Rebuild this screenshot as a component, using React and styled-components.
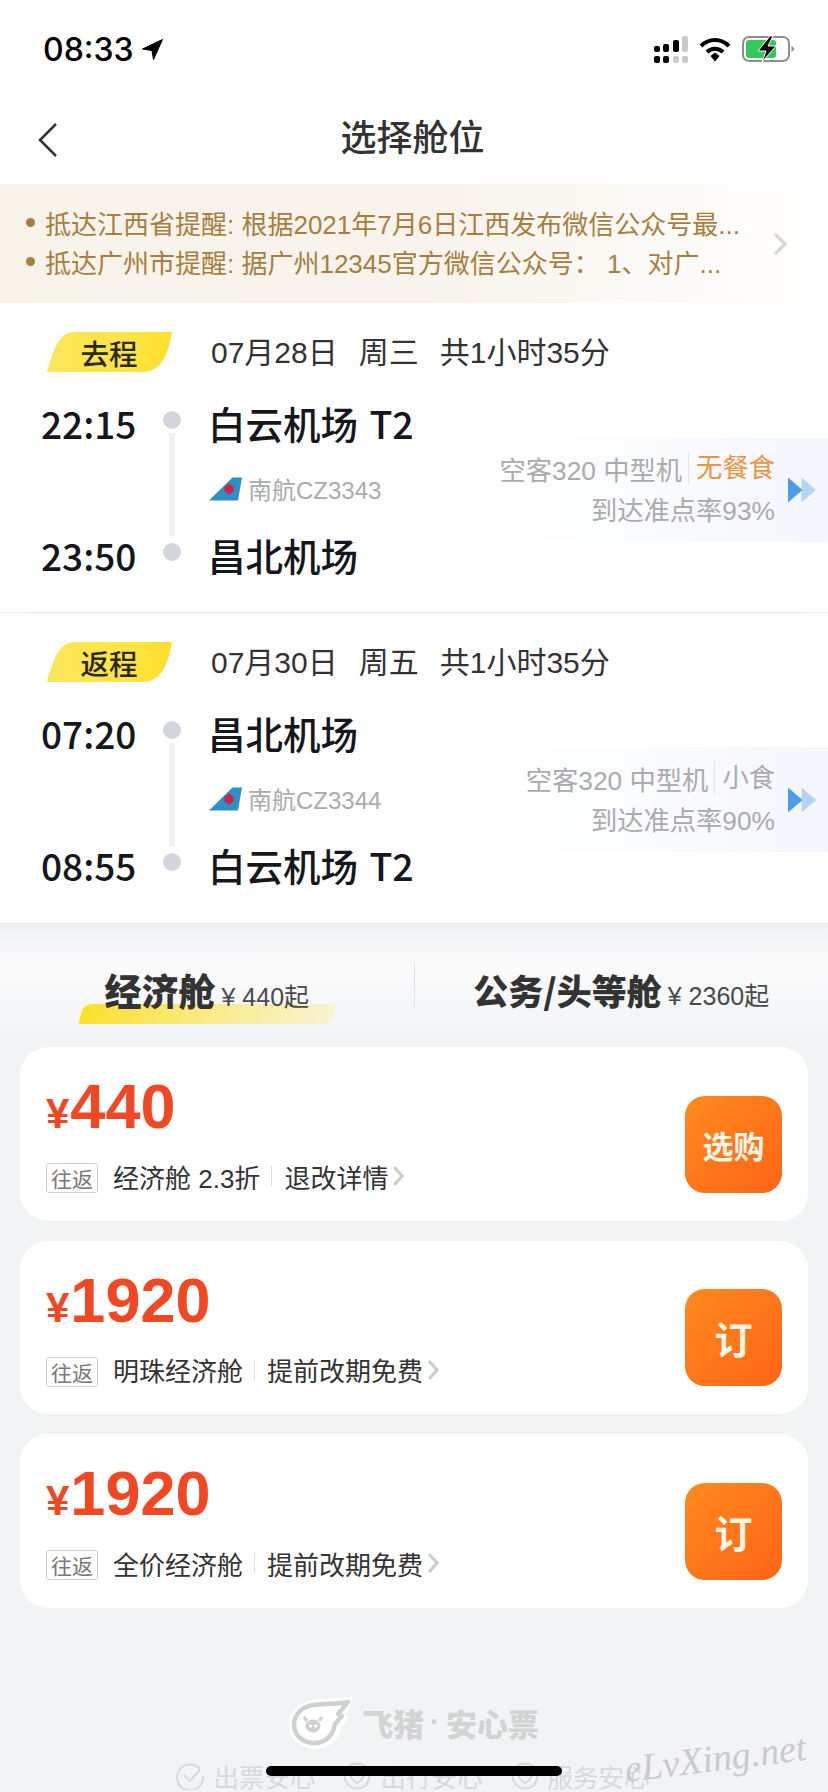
import React from "react";
import styled, { createGlobalStyle } from "styled-components";

const Global = createGlobalStyle`
  html, body { margin: 0; padding: 0; background: #f2f3f5; }
  * { box-sizing: border-box; }
  body { font-family: "Liberation Sans", "Noto Sans CJK SC", sans-serif; }
`;
const CJK = `"Noto Sans CJK SC", "Liberation Sans", sans-serif`;

const Page = styled.div`
  position: relative; width: 828px; height: 1792px; overflow: hidden;
  display: flex; flex-direction: column; background: #f2f3f5;
`;
const Top = styled.div`background: #fff;`;
const StatusBar = styled.div`
  height: 90px; display: flex; justify-content: space-between; align-items: flex-start;
  padding: 30px 33px 0 43px;
`;
const Clock = styled.div`
  display: flex; align-items: center; gap: 8px; height: 38px;
  font-family: Inter, "Liberation Sans", sans-serif; font-size: 32px; font-weight: 500; color: #000;
`;
const StatusIcons = styled.div`display: flex; align-items: center; gap: 11px; height: 38px;`;
const Nav = styled.div`
  position: relative; height: 94px; display: flex; align-items: center; justify-content: center;
`;
const Back = styled.svg`position: absolute; left: 37px; top: 32px;`;
const Title = styled.div`
  font-family: ${CJK}; font-size: 36px; font-weight: 500; color: #333; margin: -4px 3px 0 0;
`;
const Notice = styled.div`
  height: 119px; display: flex; align-items: center; justify-content: space-between;
  padding: 0 40px 0 26px;
  background: linear-gradient(90deg, #f7f2ea 0%, #f8f4ed 55%, #ffffff 100%);
`;
const NoticeLines = styled.div`display: flex; flex-direction: column; margin-top: -4px;`;
const NoticeLine = styled.div`
  display: flex; align-items: center; gap: 10px; height: 39px;
  font-size: 26px; color: #a87e3e; white-space: nowrap;
`;
const NoticeDot = styled.i`width: 9px; height: 9px; border-radius: 50%; background: #a87e3e;`;

const Flight = styled.section`
  position: relative; padding: 29px 0 ${p => p.$pb}px; background: #fff;
`;
const FlightHead = styled.div`
  display: flex; align-items: center; padding-left: 46px; height: 40px; margin-bottom: 28px;
`;
const Tag = styled.div`
  position: relative; width: 126px; height: 40px; display: flex; align-items: center; justify-content: center;
  font-family: ${CJK}; font-size: 28.5px; font-weight: 500; color: #2a2a1a;
  background: linear-gradient(95deg, #fce65c 0%, #ffe445 60%, #ffdf2a 100%);
  clip-path: path("M1 40 C6 22 12 0 28 0 L126 0 C122 22 116 40 96 40 Z");
`;
const DateLine = styled.div`
  margin: -4px 0 0 39px; display: flex; gap: 21px; font-size: 30px; color: #333; white-space: nowrap;
`;
const Timeline = styled.div`
  display: grid; grid-template-columns: 110px 40px 1fr; grid-template-rows: 50px 82px 50px;
  padding-left: 41px;
`;
const Time = styled.div`
  grid-column: 1; grid-row: ${p => p.$row}; align-self: center; margin-top: -4px;
  font-family: ${CJK}; font-size: 37px; font-weight: 500; color: #15171c; line-height: 50px;
`;
const Axis = styled.div`
  grid-column: 2; grid-row: 1 / -1; display: flex; flex-direction: column; align-items: center; padding-top: 11px;
  transform: translateX(1px);
`;
const Dot = styled.i`width: 18px; height: 18px; border-radius: 50%; background: #d3d4dc;`;
const AxisLine = styled.i`width: 6px; height: 103px; margin: 4px 0 7px; background: #f0f1f3;`;
const Airport = styled.div`
  grid-column: 3; grid-row: ${p => p.$row}; align-self: center; padding-left: 17px; margin-top: -4px;
  font-family: ${CJK}; font-size: 37.5px; font-weight: 500; color: #15171c; white-space: nowrap; line-height: 50px;
  word-spacing: 3px;
`;
const Airline = styled.div`
  grid-column: 3; grid-row: 2; align-self: center; padding-left: 18px; margin-top: -5px;
  display: flex; align-items: center; gap: 6px;
  font-size: 24px; color: #a9abad;
`;
const Perks = styled.div`
  grid-column: 3; grid-row: 1 / -1; justify-self: end; align-self: center; margin-top: -3px;
  width: 320px; height: 105px; display: flex; align-items: center; justify-content: flex-end; gap: 13px;
  padding-right: 12px;
  background: linear-gradient(90deg, rgba(243,246,251,0) 0%, rgba(243,246,251,0.35) 40%, #f3f6fb 100%);
`;
const PerkText = styled.div`
  display: flex; flex-direction: column; align-items: flex-end; margin-top: -3px;
  font-size: 26.3px; color: #a9abad;
`;
const PerkLine = styled.div`display: flex; align-items: center; height: 40px; white-space: pre;`;
const Meal = styled.span`
  margin-left: 6px; padding-left: 7px; border-left: 1px solid #e6e6e6; line-height: 34px;
  color: ${p => (p.$warm ? "#ee9340" : "#a9abad")};
`;
const Rule = styled.div`height: 1px; margin: 0 27px 0 26px; background: #e4e4e6;`;
const Hairline = styled.div`height: 1px; background: #e6e7e9;`;

const Cabins = styled.div`
  height: 123px; padding-top: 38px; display: grid; grid-template-columns: 1fr 1px 1fr; align-items: start;
  background: linear-gradient(180deg, #f0f1f3 0%, #fbfbfc 32%, #f6f7f8 65%, #f2f3f5 100%);
`;
const CabinDivider = styled.i`height: 46px; background: #e1e2e4;`;
const Cabin = styled.div`
  position: relative; display: flex; justify-content: center; align-items: baseline; gap: 6px;
  padding-top: 6px; height: 50px; z-index: 0;
`;
const CabinName = styled.span`
  font-family: ${CJK}; font-size: ${p => p.$size}px; font-weight: 900; color: #333; line-height: 44px; white-space: nowrap;
`;
const CabinFrom = styled.span`font-size: 25px; color: #4a4a4a; white-space: pre;`;
const Swoosh = styled.i`
  position: absolute; left: 81px; top: 42px; width: 253px; height: 20px; z-index: -1;
  transform: skewX(-14deg); border-radius: 8px 3px 10px 0;
  background: linear-gradient(90deg, #fde02a 0%, #faeb8f 55%, #f8f3d2 100%);
`;
const Cards = styled.div`display: flex; flex-direction: column; gap: 20px; padding: 0 20px;`;
const Card = styled.article`
  height: 173.5px; border-radius: 28px; background: #fff; padding: 0 26px;
  display: flex; justify-content: space-between;
`;
const CardInfo = styled.div`display: flex; flex-direction: column; padding-top: 27px;`;
const Price = styled.div`
  display: flex; align-items: baseline; height: 64px; line-height: 64px;
  color: #f24723; font-weight: 700; font-size: 63px;
`;
const Yen = styled.span`font-size: 42px; margin-right: 1px;`;
const Meta = styled.div`
  display: flex; align-items: center; margin-top: 23px; height: 30px;
  font-size: 26px; color: #333; white-space: nowrap;
`;
const RoundTrip = styled.span`
  width: 52px; height: 30px; margin: 4px 15px 0 0; display: flex; align-items: center; justify-content: center;
  border: 1px solid #cfcfcf; border-radius: 3px; font-size: 21px; color: #777;
`;
const MetaSep = styled.i`width: 1px; height: 20px; margin: 0 12px 0 11px; background: #ddd;`;
const Chevron = styled.svg`margin-left: 4px;`;
const Buy = styled.button`
  align-self: flex-end; margin-bottom: 28px; width: 97px; height: 97px; padding: 0; border: 0; border-radius: 20px;
  background: linear-gradient(135deg, #ff8a1e 0%, #ff6417 100%);
  font-family: ${CJK}; font-weight: 700; font-size: ${p => p.$size}px; color: #fff6e6;
`;
const Footer = styled.div`
  flex: 1; padding-top: 88px; display: flex; flex-direction: column; align-items: center; gap: 12px;
`;
const Brand = styled.div`display: flex; align-items: center; gap: 10px; height: 53px;`;
const BrandName = styled.div`
  display: flex; align-items: center; font-family: ${CJK}; font-size: 31px; font-weight: 900; color: #d2d4d4;
`;
const BrandDot = styled.span`width: 22px; text-align: center; font-family: "Liberation Sans", sans-serif; font-weight: 700;`;
const Trust = styled.div`display: flex; align-items: center; gap: 28px; height: 30px; margin-left: -2px;`;
const TrustItem = styled.div`
  display: flex; align-items: center; gap: 9px; height: 30px; line-height: 30px;
  font-family: ${CJK}; font-size: 25.5px; color: #d6d9d9; white-space: nowrap;
`;
const HomeBar = styled.i`
  position: absolute; left: 266px; bottom: 16px; width: 296px; height: 10px; border-radius: 5px; background: #000;
`;
const Watermark = styled.div`
  position: absolute; left: 624px; top: 1736px; transform: rotate(-7deg);
  font-family: "Liberation Serif", serif; font-style: italic; font-size: 38px; color: #c8cacc; white-space: nowrap;
`;

const Signal = () => (
  <svg width="34" height="27" viewBox="0 0 34 27">
    {[[0,10],[9,8],[19,4],[28,0]].map(([x, y], i) => (
      <rect key={i} x={x} y={y} width="6" height={16 - y} rx="2" fill={i === 3 ? "#c9c9c9" : "#000"} />
    ))}
    {[0, 9, 19, 28].map((x, i) => (
      <rect key={x} x={x} y="20" width="6" height="7" rx="2" fill={i > 1 ? "#c9c9c9" : "#000"} />
    ))}
  </svg>
);
const Wifi = () => (
  <svg width="32" height="25" viewBox="0 0 32 25">
    <path d="M2 9C10 1 22 1 30 9" fill="none" stroke="#000" strokeWidth="4" />
    <path d="M8 15C12.500 10.500 19.500 10.500 24 15" fill="none" stroke="#000" strokeWidth="4" />
    <path d="M11.500 19L16 15.500L20.500 19L16 24.500Z" fill="#000" />
  </svg>
);
const Battery = () => (
  <svg width="53" height="26" viewBox="0 0 53 26">
    <rect x="1" y="1" width="46" height="24" rx="6" fill="#fff" stroke="#8e8e8e" strokeWidth="2" />
    <rect x="4" y="4" width="30" height="18" rx="3" fill="#34c759" />
    <path d="M49.500 9.500L52.500 13L49.500 16.500Z" fill="#8e8e8e" />
    <path d="M28 0L16 15H24L20 26L34 10H26L31 0Z" fill="#000" stroke="#fff" strokeWidth="1" />
  </svg>
);
const LocationArrow = () => (
  <svg width="21" height="21" viewBox="0 0 21 21"><path d="M20.500 0.500L0.500 10L10 11.500L11.500 20.500Z" fill="#000" stroke="#000" strokeLinejoin="round" /></svg>
);
const SouthernLogo = () => (
  <svg width="33" height="24" viewBox="0 0 33 24">
    <path d="M0 23.500L23.500 0.500H33L29 23.500Z" fill="#2c90c6" />
    <circle cx="20" cy="12" r="4.500" fill="#c9254a" />
    <path d="M20 6V18M15 10L25 14M25 10L15 14" stroke="#c9254a" strokeWidth="1.500" />
  </svg>
);
const DoubleArrow = () => (
  <svg width="28" height="28" viewBox="0 0 27 26" style={{ flex: "none" }}>
    <path d="M13 1L27 13L13 25Z" fill="#b3d4f5" />
    <path d="M0 1L14 13L0 25Z" fill="#4d9cea" />
  </svg>
);
const SmallChevron = () => (
  <Chevron width="12" height="22" viewBox="0 0 12 22"><path d="M2 2L10 11L2 20" fill="none" stroke="#cdcdcd" strokeWidth="3.200" /></Chevron>
);
const CheckOpen = () => (
  <svg width="28" height="28" viewBox="0 0 28 28" style={{ flex: "none" }}>
    <path d="M24 7A13 13 0 1 0 27 14" fill="none" stroke="#d6d9d9" strokeWidth="2" />
    <path d="M8 13L13.500 19L24 8" fill="none" stroke="#d6d9d9" strokeWidth="2" />
  </svg>
);
const CheckShield = () => (
  <svg width="28" height="28" viewBox="0 0 28 28" style={{ flex: "none" }}>
    <circle cx="14" cy="14" r="12.500" fill="none" stroke="#d6d9d9" strokeWidth="2" />
    <path d="M7 10L14 8L21 10C21 16 18 19 14 21C10 19 7 16 7 10Z" fill="none" stroke="#d6d9d9" strokeWidth="2" />
  </svg>
);
const PigLogo = () => (
  <svg width="63" height="53" viewBox="0 0 63 53">
    <path d="M63 0C50 3 38 2 27 3C11 5 0 16 0 29C0 43 12 53 26 53C40 53 50 44 52 31L60 21L56 19L61 11Z" fill="#fff" />
    <path d="M59 6C45 9 34 7 24 9C12 11 5 19 5 29C5 39 14 47 25 47C36 47 44 40 46 28L53 20L49 18Z" fill="none" stroke="#cfd1d1" strokeWidth="4.500" strokeLinejoin="round" />
    <ellipse cx="24" cy="30" rx="7.500" ry="6.500" fill="#cfd1d1" />
    <circle cx="21.500" cy="30" r="1.600" fill="#fff" /><circle cx="26.500" cy="30" r="1.600" fill="#fff" />
    <path d="M15 21L18 25M33 21L30 25" stroke="#cfd1d1" strokeWidth="3" />
  </svg>
);

const FlightBlock = ({ label, day, week, span, from, to, t1, t2, flight, plane, meal, warm, ontime, pb }) => (
  <Flight $pb={pb}>
    <FlightHead>
      <Tag>{label}</Tag>
      <DateLine><span>{day}</span><span>{week}</span><span>{span}</span></DateLine>
    </FlightHead>
    <Timeline>
      <Time $row={1}>{t1}</Time>
      <Time $row={3}>{t2}</Time>
      <Axis><Dot /><AxisLine /><Dot /></Axis>
      <Airport $row={1}>{from}</Airport>
      <Airline><SouthernLogo />{flight}</Airline>
      <Perks>
        <PerkText>
          <PerkLine>{plane}<Meal $warm={warm}>{meal}</Meal></PerkLine>
          <PerkLine>{ontime}</PerkLine>
        </PerkText>
        <DoubleArrow />
      </Perks>
      <Airport $row={3}>{to}</Airport>
    </Timeline>
  </Flight>
);

const Fare = ({ price, cls, rule, cta, size }) => (
  <Card>
    <CardInfo>
      <Price><Yen>¥</Yen>{price}</Price>
      <Meta>
        <RoundTrip>往返</RoundTrip>{cls}<MetaSep />{rule}<SmallChevron />
      </Meta>
    </CardInfo>
    <Buy $size={size}>{cta}</Buy>
  </Card>
);

export default function App() {
  return (
    <Page>
      <Global />
      <Top>
        <StatusBar>
          <Clock>08:33<LocationArrow /></Clock>
          <StatusIcons><Signal /><Wifi /><Battery /></StatusIcons>
        </StatusBar>
        <Nav>
          <Back width="22" height="36" viewBox="0 0 22 36"><path d="M19 2L3 18L19 34" fill="none" stroke="#333" strokeWidth="2.500" /></Back>
          <Title>选择舱位</Title>
        </Nav>
      </Top>
      <Notice>
        <NoticeLines>
          <NoticeLine><NoticeDot />抵达江西省提醒: 根据2021年7月6日江西发布微信公众号最...</NoticeLine>
          <NoticeLine><NoticeDot />抵达广州市提醒: 据广州12345官方微信公众号： 1、对广...</NoticeLine>
        </NoticeLines>
        <svg width="16" height="24" viewBox="0 0 16 24"><path d="M3 2L13 12L3 22" fill="none" stroke="#d8d8d8" strokeWidth="3.500" /></svg>
      </Notice>
      <FlightBlock label="去程" day="07月28日" week="周三" span="共1小时35分" t1="22:15" t2="23:50" from="白云机场 T2" to="昌北机场"
        flight="南航CZ3343" plane="空客320 中型机" meal="无餐食" warm ontime="到达准点率93%" pb={30} />
      <Rule />
      <FlightBlock label="返程" day="07月30日" week="周五" span="共1小时35分" t1="07:20" t2="08:55" from="昌北机场" to="白云机场 T2"
        flight="南航CZ3344" plane="空客320 中型机" meal="小食" ontime="到达准点率90%" pb={31} />
      <Hairline />
      <Cabins>
        <Cabin><Swoosh /><CabinName $size={37}>经济舱</CabinName><CabinFrom>¥ 440起</CabinFrom></Cabin>
        <CabinDivider />
        <Cabin><CabinName $size={35}>公务/头等舱</CabinName><CabinFrom>¥ 2360起</CabinFrom></Cabin>
      </Cabins>
      <Cards>
        <Fare price="440" cls="经济舱 2.3折" rule="退改详情" cta="选购" size={31} />
        <Fare price="1920" cls="明珠经济舱" rule="提前改期免费" cta="订" size={38} />
        <Fare price="1920" cls="全价经济舱" rule="提前改期免费" cta="订" size={38} />
      </Cards>
      <Footer>
        <Brand><PigLogo /><BrandName>飞猪<BrandDot>·</BrandDot>安心票</BrandName></Brand>
        <Trust>
          <TrustItem><CheckOpen />出票安心</TrustItem>
          <TrustItem><CheckShield />出行安心</TrustItem>
          <TrustItem><CheckShield />服务安心</TrustItem>
        </Trust>
      </Footer>
      <Watermark>eLvXing.net</Watermark>
      <HomeBar />
    </Page>
  );
}
